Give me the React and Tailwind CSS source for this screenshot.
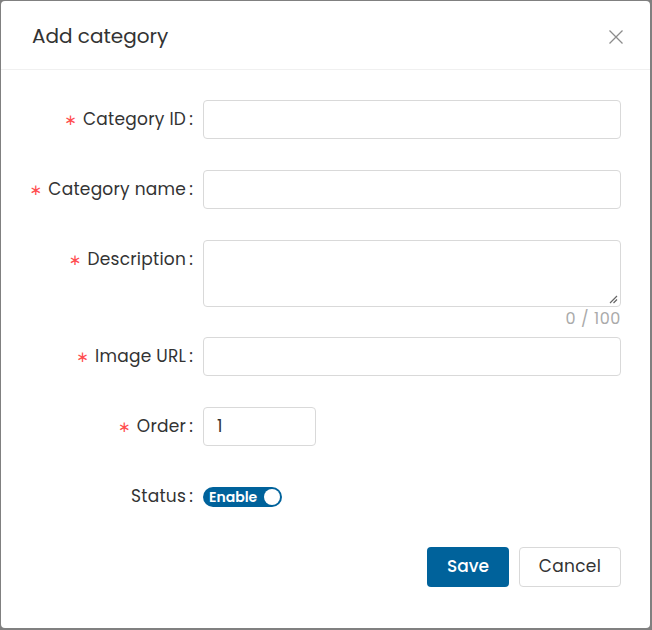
import React from "react";

const font = { fontFamily: "Poppins, 'Open Sans', 'Liberation Sans', sans-serif" };

function Label({ text, required }) {
  return (
    <div className="w-[183px] shrink-0 flex justify-end items-center h-[39px] pr-[10px] text-[17px] text-[#333] tracking-[0.25px] whitespace-nowrap">
      {required && (
        <span
          className="text-[#ff4d4f] mr-[6px] text-[15px] leading-none relative top-[1px]"
          style={{ fontFamily: "'DejaVu Sans', sans-serif" }}
        >
          ∗
        </span>
      )}
      <span>{text}</span>
      <span className="ml-[3px]">:</span>
    </div>
  );
}

function Input({ className = "", value = "" }) {
  return (
    <div className={"h-[39px] border border-[#d9d9d9] rounded-[4px] bg-white flex items-center px-[13px] text-[17px] text-[#333] " + className}>
      {value}
    </div>
  );
}

export default function App() {
  return (
    <div className="w-[652px] h-[630px] bg-[#808080] p-[1px] pr-[2px] pb-[2px]" style={font}>
      <div className="w-full h-full bg-white rounded-[4px] flex flex-col">
        <div className="h-[69px] shrink-0 border-b border-[#f0f0f0] flex items-center justify-between pl-[31px] pr-[26px]">
          <div className="text-[20px] text-[#333] pt-[1px]">Add category</div>
          <svg width="16" height="16" viewBox="0 0 16 16" className="mt-[3px]">
            <path d="M1.5 1.5L14.5 14.5M14.5 1.5L1.5 14.5" stroke="#8c8c8c" strokeWidth="1.3" />
          </svg>
        </div>
        <div className="flex flex-col pl-[19px] pr-[29px] pt-[30px]">
          <div className="flex mb-[31px]">
            <Label text="Category ID" required />
            <Input className="flex-1" />
          </div>
          <div className="flex mb-[31px]">
            <Label text="Category name" required />
            <Input className="flex-1" />
          </div>
          <div className="flex mb-[7px]">
            <Label text="Description" required />
            <div className="flex-1 flex flex-col">
              <div className="h-[67px] border border-[#d9d9d9] rounded-[4px] relative">
                <svg width="9" height="9" viewBox="0 0 9 9" className="absolute right-[2px] bottom-[2px]">
                  <path d="M8 1L1 8M8 4.5L4.5 8" stroke="#666" strokeWidth="1.2" />
                </svg>
              </div>
              <div className="text-right text-[#aaa] text-[16px] leading-[23px] tracking-[0.6px]">0 / 100</div>
            </div>
          </div>
          <div className="flex mb-[31px]">
            <Label text="Image URL" required />
            <Input className="flex-1" />
          </div>
          <div className="flex mb-[31px]">
            <Label text="Order" required />
            <Input className="w-[113px]" value="1" />
          </div>
          <div className="flex mb-[31px]">
            <Label text="Status" />
            <div className="h-[39px] flex items-center">
              <div className="w-[79px] h-[20px] rounded-full bg-[#00629b] flex items-center justify-between pl-[6px] pr-[2px]">
                <span className="text-white text-[14px] font-semibold leading-none">Enable</span>
                <span className="w-[16px] h-[16px] rounded-full bg-white"></span>
              </div>
            </div>
          </div>
          <div className="flex justify-end gap-[10px]">
            <div className="w-[82px] h-[40px] rounded-[4px] bg-[#00629b] text-white text-[17px] font-medium flex items-center justify-center">Save</div>
            <div className="w-[102px] h-[40px] rounded-[4px] border border-[#d9d9d9] text-[#333] text-[17px] tracking-[0.3px] flex items-center justify-center">Cancel</div>
          </div>
        </div>
      </div>
    </div>
  );
}
